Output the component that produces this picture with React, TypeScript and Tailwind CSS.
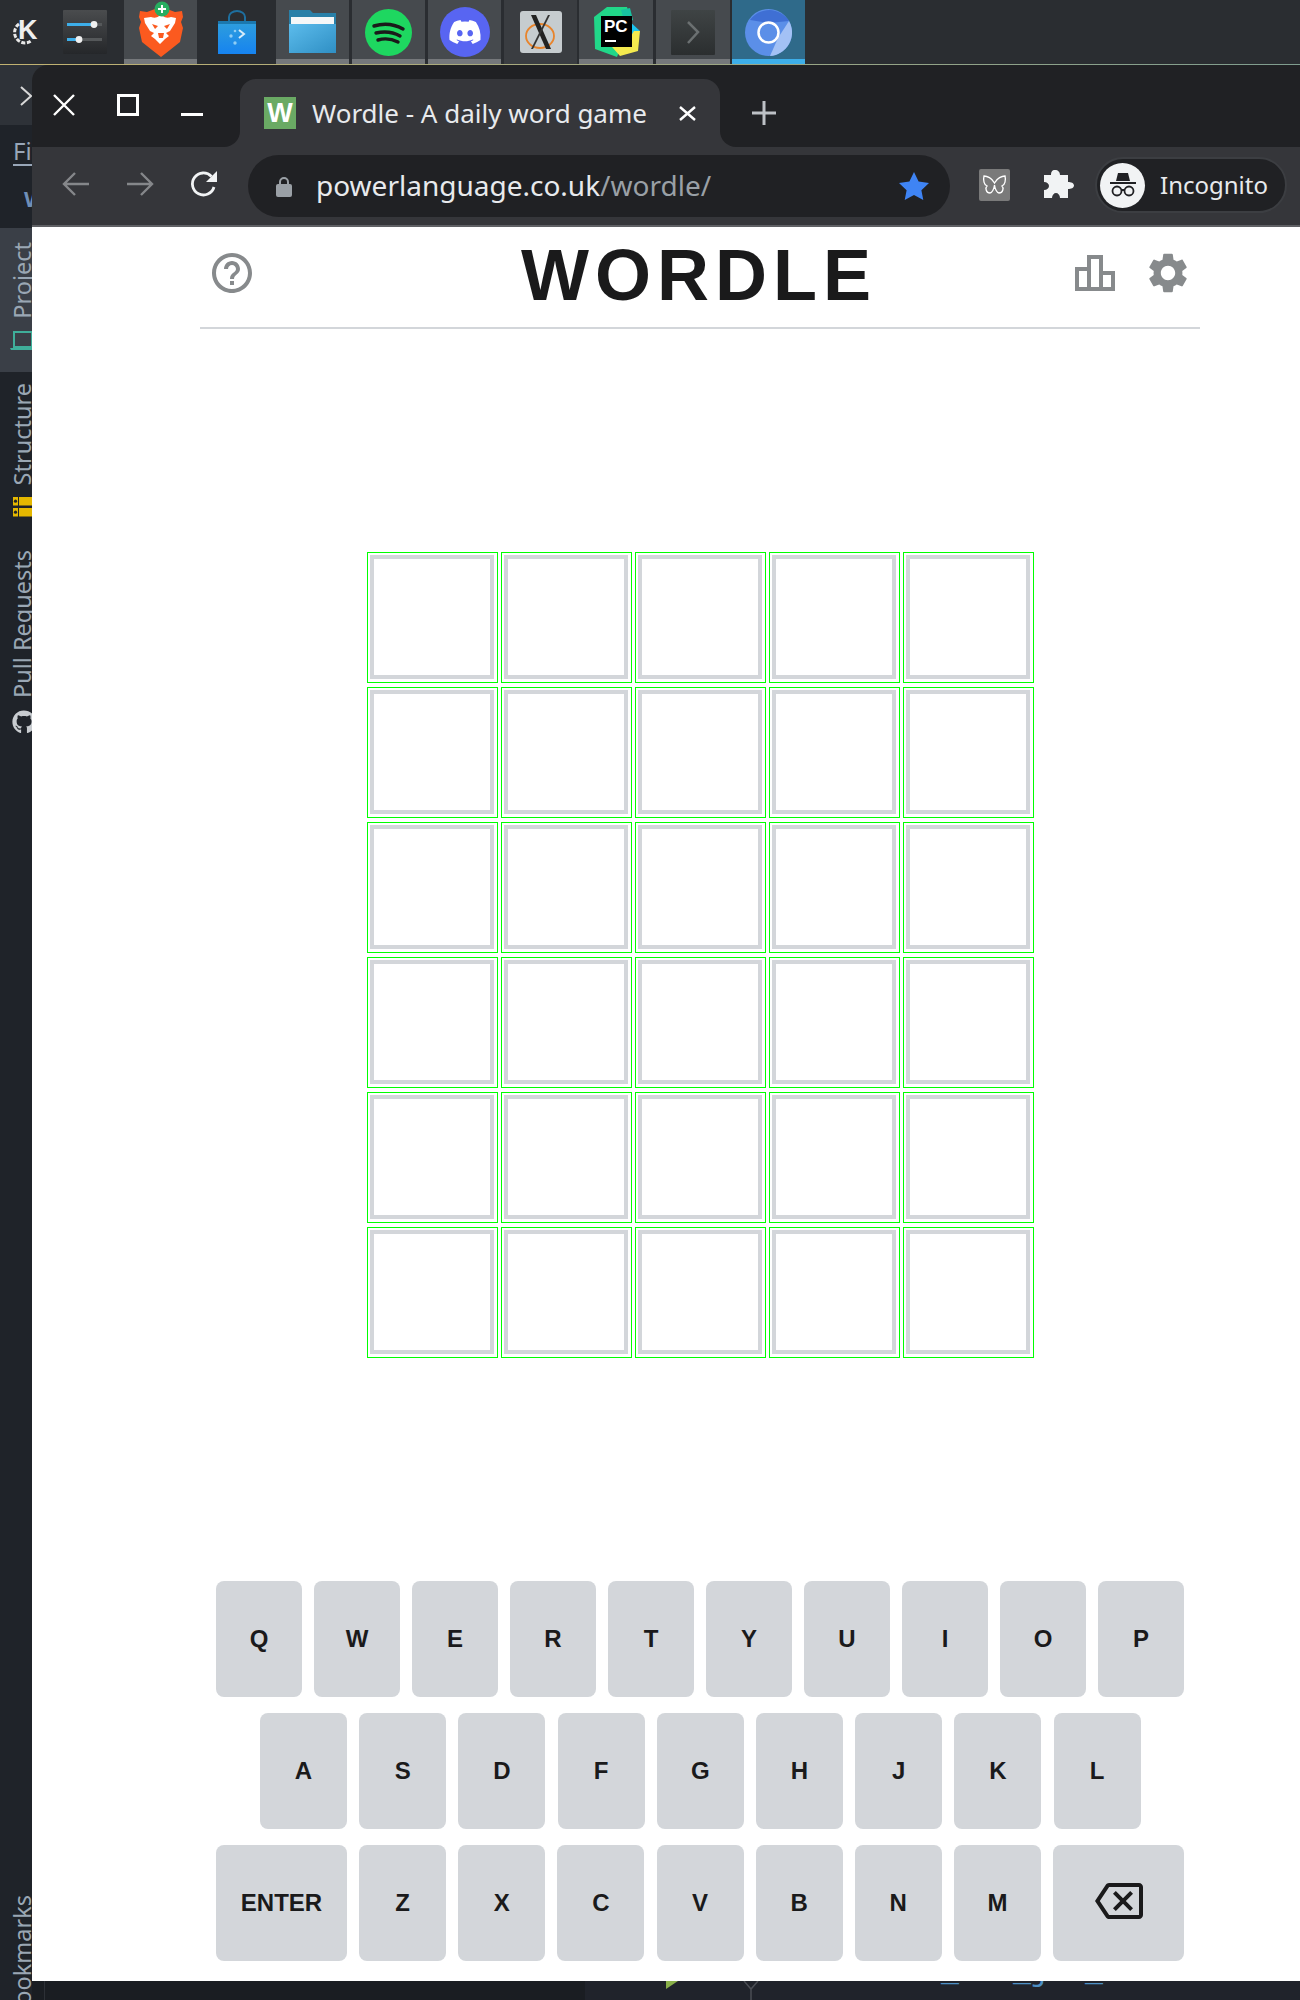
import { FaDiscord, FaGithub } from "react-icons/fa"

const ROWS = [
  ["Q", "W", "E", "R", "T", "Y", "U", "I", "O", "P"],
  ["A", "S", "D", "F", "G", "H", "J", "K", "L"],
]
const LAST_ROW = ["Z", "X", "C", "V", "B", "N", "M"]

const keyClass =
  "h-[116px] flex items-center justify-center rounded-lg bg-[#d3d6da] text-[24px] font-bold text-[#1a1a1b]"

function TaskItem({ children, active, plain, strip = true, className = "" }: { children: React.ReactNode; active?: boolean; plain?: boolean; strip?: boolean; className?: string }) {
  const bg = active ? "bg-[#2f6a8a]" : plain ? "" : strip ? "bg-[#464a4e]" : "bg-[#3a3d41]"
  return (
    <div className={`relative h-[64px] w-[73px] flex items-center justify-center ${bg} ${className}`}>
      {children}
      {strip && !plain && (
        <div className={`absolute bottom-0 left-0 right-0 h-[5px] ${active ? "bg-[#3daee9]" : "bg-[#75787b]"}`} />
      )}
    </div>
  )
}

function KdeIcon() {
  return (
    <div className="relative w-[27px] h-[26px] mt-[3px]">
      <svg width="27" height="26" viewBox="0 0 27 26" className="absolute inset-0">
        <path d="M9 3a10 10 0 1 0 12 17" fill="none" stroke="#e8e8e8" strokeWidth="3" strokeDasharray="4 1.6" />
      </svg>
      <span className="absolute left-[8px] -top-[4px] text-[27px] leading-none font-bold text-[#eeeeee] font-['Liberation_Sans',sans-serif]">K</span>
    </div>
  )
}

function SlidersIcon() {
  return (
    <svg width="44" height="44" viewBox="0 0 44 44">
      <defs>
        <linearGradient id="sl" x1="0" y1="0" x2="0" y2="1">
          <stop offset="0" stopColor="#4a4c4e" />
          <stop offset="1" stopColor="#25272a" />
        </linearGradient>
      </defs>
      <rect width="44" height="44" rx="1" fill="url(#sl)" />
      <rect x="4" y="13" width="35" height="3" fill="#55585a" />
      <rect x="4" y="13" width="27" height="3" fill="#3daee9" />
      <circle cx="31" cy="14.5" r="3.4" fill="#f0f0f0" />
      <rect x="4" y="28" width="35" height="3" fill="#55585a" />
      <rect x="4" y="28" width="15" height="3" fill="#3daee9" />
      <circle cx="16" cy="29.5" r="3.4" fill="#f0f0f0" />
    </svg>
  )
}

function BraveIcon() {
  return (
    <svg width="48" height="58" viewBox="0 0 48 58" className="mt-[-4px]">
      <path d="M10 11 18 8h12l8 3 7-1 1 6-2 5 2 6-3 14-10 8-9 7-9-7-10-8L2 27l2-6-2-5 1-6z" fill="#fb5a1f" />
      <path d="M14 16c3 1 6 1 8-1h4c2 2 5 2 8 1l5 1-1 5-5 8-4 2 3 3-4 3-5 5-5-5-4-3 3-3-4-2-5-8-1-5z" fill="#ffffff" />
      <path d="M15 23l6 2-3 3zM33 23l-6 2 3 3z" fill="#fb5a1f" />
      <path d="M21 32h6l-1 5h-4z" fill="#fb5a1f" />
      <circle cx="25" cy="8" r="7.5" fill="#27ae60" />
      <path d="M25 4v8M21 8h8" stroke="#ffffff" strokeWidth="2" />
    </svg>
  )
}

function StoreIcon() {
  return (
    <svg width="38" height="44" viewBox="0 0 38 44">
      <defs>
        <linearGradient id="bag" x1="0" y1="0" x2="0" y2="1">
          <stop offset="0" stopColor="#2f9fdc" />
          <stop offset="1" stopColor="#1683f0" />
        </linearGradient>
      </defs>
      <path d="M11 11V7a8 6 0 0 1 16 0v4" fill="none" stroke="#1e6f9f" strokeWidth="2" />
      <rect x="0" y="11" width="38" height="33" fill="url(#bag)" />
      <rect x="0" y="11" width="38" height="3" fill="#1b78ae" />
      <path d="M21 20l5 4-5 4" fill="none" stroke="#d8ecfa" strokeWidth="2" />
      <circle cx="13" cy="26" r="1.7" fill="#8fcdf5" />
      <circle cx="17" cy="21" r="1.3" fill="#8fcdf5" />
      <circle cx="17" cy="33" r="1.7" fill="#8fcdf5" />
    </svg>
  )
}

function FolderIcon() {
  return (
    <svg width="47" height="44" viewBox="0 0 47 44">
      <defs>
        <linearGradient id="fold" x1="0" y1="0" x2="1" y2="1">
          <stop offset="0" stopColor="#5cbcec" />
          <stop offset="1" stopColor="#2f8fc4" />
        </linearGradient>
      </defs>
      <path d="M0 0h21l3 3h23v14H0z" fill="#2980a8" />
      <rect x="2" y="7" width="43" height="7" fill="#f5f7f8" />
      <path d="M0 14h47v29H0z" fill="url(#fold)" />
    </svg>
  )
}

function SpotifyIcon() {
  return (
    <svg width="47" height="47" viewBox="0 0 47 47">
      <circle cx="23.5" cy="23.5" r="23.5" fill="#1ed760" />
      <path d="M9 17c10-3 20-2 29 3M11 24c9-2 17-1 24 3M13 31c7-2 14-1 20 2" fill="none" stroke="#1a1a1a" strokeWidth="3.4" strokeLinecap="round" />
    </svg>
  )
}

function XAppIcon() {
  return (
    <svg width="42" height="42" viewBox="0 0 42 42">
      <rect width="42" height="42" rx="3" fill="#c6cccf" />
      <ellipse cx="20" cy="25" rx="14" ry="12" fill="none" stroke="#e8842c" strokeWidth="1.800" />
      <path d="M11 4h5l15 34h-5z" fill="#222222" />
      <path d="M28 4h2L13 38h-2z" fill="#333333" />
    </svg>
  )
}

function PyCharmIcon() {
  return (
    <div className="relative w-[50px] h-[50px]">
      <svg width="50" height="50" viewBox="0 0 50 50" className="absolute inset-0">
        <path d="M3 10 16 0h20l4 14-14 36L4 42z" fill="#21d789" />
        <path d="M30 3l9-2 3 12-8 4z" fill="#17c1a0" />
        <path d="M36 12l13 12-6 8z" fill="#1bc4ee" />
        <path d="M14 32h24l5-8 6 0-2 20-18 5z" fill="#f4ea4e" />
      </svg>
      <div className="absolute left-[10px] top-[9px] w-[31px] h-[31px] bg-black">
        <div className="pl-[3px] pt-[1px] text-[17px] leading-[19px] font-bold text-white font-['Liberation_Sans',sans-serif]">PC</div>
        <div className="ml-[4px] mt-[4px] w-[11px] h-[2px] bg-white" />
      </div>
    </div>
  )
}

function TerminalIcon() {
  return (
    <svg width="44" height="45" viewBox="0 0 44 45">
      <defs>
        <linearGradient id="term" x1="0" y1="0" x2="0" y2="1">
          <stop offset="0" stopColor="#3f4445" />
          <stop offset="1" stopColor="#2b2e2f" />
        </linearGradient>
      </defs>
      <rect width="44" height="45" rx="1" fill="url(#term)" />
      <path d="M17 12l10 10-10 11" fill="none" stroke="#6b7071" strokeWidth="2.5" />
    </svg>
  )
}

function ChromiumIcon() {
  return (
    <svg width="47" height="47" viewBox="0 0 47 47">
      <circle cx="23.5" cy="23.5" r="23.5" fill="#5b8fe8" />
      <path d="M5 11A23.5 23.5 0 0 1 44 12L23.5 14z" fill="#3f6fd4" />
      <path d="M44 12A23.5 23.5 0 0 1 25 47l8-18z" fill="#a3c1f5" />
      <circle cx="23.5" cy="23.5" r="10" fill="#5b8fe8" stroke="#ffffff" strokeWidth="2.5" />
    </svg>
  )
}

function TaskBar() {
  return (
    <div className="h-[64px] flex items-center bg-[#2a2d31]">
      <div className="ml-[10px]"><KdeIcon /></div>
      <div className="ml-[26px]"><SlidersIcon /></div>
      <TaskItem className="ml-[17px]"><BraveIcon /></TaskItem>
      <TaskItem plain className="!w-[79px]"><StoreIcon /></TaskItem>
      <TaskItem><FolderIcon /></TaskItem>
      <TaskItem className="ml-[3px]"><SpotifyIcon /></TaskItem>
      <TaskItem className="ml-[3px]">
        <div className="w-[50px] h-[50px] rounded-full bg-[#5865f2] flex items-center justify-center">
          <FaDiscord size={34} color="#ffffff" />
        </div>
      </TaskItem>
      <TaskItem strip={false} className="ml-[3px]"><XAppIcon /></TaskItem>
      <TaskItem className="ml-[2px] !w-[74px]"><PyCharmIcon /></TaskItem>
      <TaskItem className="ml-[3px] !w-[74px]"><TerminalIcon /></TaskItem>
      <TaskItem active className="ml-[2px]"><ChromiumIcon /></TaskItem>
    </div>
  )
}

function VerticalLabel({ text }: { text: string }) {
  return (
    <div className="ml-[9px] [writing-mode:vertical-rl] rotate-180 text-[23.5px] leading-[27px] text-[#9aa7b4] whitespace-nowrap">
      {text}
    </div>
  )
}

function Sidebar() {
  return (
    <div className="w-[32px] shrink-0 flex flex-col overflow-hidden bg-[#1f2329] font-['Noto_Sans',sans-serif]">
      <div className="h-[60px] shrink-0 bg-[#2e3238] pt-[21px] pl-[20px]">
        <svg width="14" height="20" viewBox="0 0 14 20">
          <path d="M1 1l10 9-10 9" fill="none" stroke="#d8d8d8" strokeWidth="2" />
        </svg>
      </div>
      <div className="h-[103px] shrink-0 pl-[13px] pt-[11px]">
        <div className="text-[24px] leading-[30px] text-[#98a6b8] underline underline-offset-4 whitespace-nowrap">File</div>
        <div className="mt-[20px] ml-[11px] text-[22px] leading-[24px] font-bold text-[#6f8fb8]">W</div>
      </div>
      <div className="h-[144px] shrink-0 bg-[#3a3f47] pt-[14px]">
        <VerticalLabel text="Project" />
        <svg width="32" height="20" viewBox="0 0 32 20" className="mt-[12px]">
          <path d="M14 1h18v15H14z" fill="none" stroke="#3fae9a" strokeWidth="2" />
          <path d="M10 17h22v2H11z" fill="#3fae9a" />
        </svg>
      </div>
      <div className="mt-[11px]"><VerticalLabel text="Structure" /></div>
      <svg width="32" height="20" viewBox="0 0 32 20" className="mt-[12px] shrink-0">
        <rect x="13" y="0" width="19" height="8.5" fill="#e5b800" />
        <rect x="13" y="11" width="19" height="8.5" fill="#e5b800" />
        <rect x="18" y="0" width="1" height="20" fill="#1f2329" />
        <circle cx="15.5" cy="4.2" r="1.6" fill="#1f2329" />
        <circle cx="15.5" cy="15.2" r="1.6" fill="#1f2329" />
      </svg>
      <div className="mt-[33px]"><VerticalLabel text="Pull Requests" /></div>
      <div className="mt-[12px] ml-[12px] shrink-0"><FaGithub size={24} color="#c8ccd0" /></div>
      <div className="mt-auto h-[105px] shrink-0 overflow-hidden">
        <VerticalLabel text="Bookmarks" />
      </div>
    </div>
  )
}

function WindowControls() {
  return (
    <div className="w-[208px] shrink-0 rounded-br-[16px] bg-[#202124] flex items-start pl-[21px] pt-[29px]">
      <svg width="22" height="22" viewBox="0 0 22 22">
        <path d="M1 1l20 20M21 1L1 21" stroke="#ffffff" strokeWidth="2.4" />
      </svg>
      <div className="ml-[42px] w-[22px] h-[22px] border-[3px] border-white" />
      <div className="ml-[42px] mt-[19px] w-[22px] h-[3px] bg-white" />
    </div>
  )
}

function Tab() {
  return (
    <div className="w-[480px] shrink-0 bg-[#202124] pt-[14px]">
      <div className="h-[68px] rounded-t-[16px] bg-[#35363a] flex items-center pl-[24px]">
        <div className="w-[32px] h-[32px] bg-[#6aaa64] flex items-center justify-center text-[27px] font-bold text-white font-['Liberation_Sans',sans-serif]">W</div>
        <span className="ml-[16px] w-[367px] text-[26px] leading-none text-[#e8eaed] whitespace-nowrap font-['Noto_Sans',sans-serif]">Wordle - A daily word game</span>
        <svg width="17" height="15" viewBox="0 0 17 15">
          <path d="M1 1l15 13M16 1L1 14" stroke="#ffffff" strokeWidth="2.4" />
        </svg>
      </div>
    </div>
  )
}

function TitleBar() {
  return (
    <div className="h-[82px] shrink-0 flex bg-[#35363a]">
      <WindowControls />
      <Tab />
      <div className="flex-1 rounded-bl-[16px] bg-[#202124] pl-[32px] pt-[36px]">
        <svg width="24" height="24" viewBox="0 0 24 24">
          <path d="M12 0v24M0 12h24" stroke="#bdc1c6" strokeWidth="3" />
        </svg>
      </div>
    </div>
  )
}

function Toolbar() {
  return (
    <div className="h-[80px] shrink-0 flex items-start bg-[#35363a] border-b-2 border-[#5f6064] font-['Noto_Sans',sans-serif]">
      <svg width="28" height="24" viewBox="0 0 28 24" className="ml-[30px] mt-[25px]">
        <path d="M27 12H2M13 1L2 12l11 11" fill="none" stroke="#85878a" strokeWidth="2.4" />
      </svg>
      <svg width="28" height="24" viewBox="0 0 28 24" className="ml-[36px] mt-[25px]">
        <path d="M1 12h25M15 1l11 11-11 11" fill="none" stroke="#85878a" strokeWidth="2.4" />
      </svg>
      <svg width="28" height="28" viewBox="0 0 28 28" className="ml-[36px] mt-[23px]">
        <path d="M24 17a11 11 0 1 1-2.5-10.5" fill="none" stroke="#f1f3f4" strokeWidth="2.8" />
        <path d="M27 1v11H16z" fill="#f1f3f4" />
      </svg>
      <div className="ml-[30px] mt-[8px] w-[702px] h-[62px] rounded-full bg-[#202124] flex items-center pl-[28px]">
        <svg width="16" height="21" viewBox="0 0 16 21">
          <path d="M4 9V6a4 4 0 0 1 8 0v3" fill="none" stroke="#9aa0a6" strokeWidth="2" />
          <rect x="0" y="8" width="16" height="13" rx="2" fill="#9aa0a6" />
        </svg>
        <span className="ml-[24px] -mt-[3px] text-[28px] leading-none text-[#e8eaed] whitespace-nowrap">
          powerlanguage.co.uk<span className="text-[#9aa0a6]">/wordle/</span>
        </span>
        <svg width="30" height="28" viewBox="0 0 30 28" className="ml-auto mr-[21px]">
          <path d="M15 0l4.6 9.6L30 10.900l-7.600 7.300L24.300 28 15 23l-9.300 5 1.900-9.800L0 10.900l10.400-1.300z" fill="#3f84f4" />
        </svg>
      </div>
      <div className="ml-[29px] mt-[22px] w-[31px] h-[32px] rounded-[2px] bg-[#7a7a7a] flex items-center justify-center">
        <svg width="25" height="20" viewBox="0 0 25 20">
          <path d="M12.500 8C10 3 5 1 2 1c-1 4 0 9 3 10-2 2-1 7 3 7 2 0 4-4 4.500-8 .5 4 2.500 8 4.500 8 4 0 5-5 3-7 3-1 4-6 3-10-3 0-8 2-10.500 7z" fill="none" stroke="#ffffff" strokeWidth="1.300" />
        </svg>
      </div>
      <svg width="30" height="28" viewBox="0 0 30 28" className="ml-[34px] mt-[23px]">
        <path d="M11 0c3 0 5 2 5 5h8v7c3 0 6 1 6 3.500S27 19 24 19v9H16c0-3-2-5-4-5s-4 2-4 5H0v-8c3 0 5-2 5-4s-2-4-5-4V5h7c0-3 1-5 4-5z" fill="#f1f3f4" />
      </svg>
      <div className="ml-[21px] mt-[10px] w-[192px] h-[56px] rounded-full bg-[#202124] border-2 border-[#3c3e42] flex items-center pl-[3px]">
        <div className="w-[45px] h-[45px] shrink-0 rounded-full bg-[#f1f3f4] flex items-center justify-center">
          <svg width="32" height="32" viewBox="0 0 32 32">
            <path d="M9 12l2-8h10l2 8z" fill="#202124" />
            <rect x="3" y="13" width="26" height="2" fill="#202124" />
            <circle cx="10" cy="22" r="4.500" fill="none" stroke="#202124" strokeWidth="1.800" />
            <circle cx="22" cy="22" r="4.500" fill="none" stroke="#202124" strokeWidth="1.800" />
            <path d="M14 21h4" stroke="#202124" strokeWidth="1.800" />
          </svg>
        </div>
        <span className="ml-[15px] -mt-[1px] text-[24px] leading-none text-[#e8eaed]">Incognito</span>
      </div>
    </div>
  )
}

function WordleHeader() {
  return (
    <div className="h-[102px] flex items-center border-b-2 border-[#d3d6da] pb-[8px]">
      <div className="w-[116px] pl-[8px]">
        <svg width="48" height="48" viewBox="0 0 24 24" fill="#878a8c">
          <path d="M11 18h2v-2h-2v2zm1-16C6.480 2 2 6.480 2 12s4.480 10 10 10 10-4.480 10-10S17.520 2 12 2zm0 18c-4.410 0-8-3.590-8-8s3.590-8 8-8 8 3.590 8 8-3.590 8-8 8zm0-14c-2.210 0-4 1.790-4 4h2c0-1.100.9-2 2-2s2 .9 2 2c0 2-3 1.750-3 5h2c0-2.250 3-2.500 3-5 0-2.210-1.790-4-4-4z" />
        </svg>
      </div>
      <h1 className="flex-1 mt-[4px] pl-[7px] text-center text-[72px] leading-none font-bold tracking-[6px] text-[#1a1a1b]">WORDLE</h1>
      <div className="w-[125px] flex items-center">
        <svg width="48" height="48" viewBox="0 0 24 24" fill="#878a8c" className="-ml-[4px]">
          <path d="M16 11V3H8v6H2v12h20V11H16z M10 5h4v14h-4V5z M4 11h4v8H4V11z M20 19h-4v-6h4V19z" />
        </svg>
        <svg width="48" height="48" viewBox="0 0 24 24" fill="#878a8c" className="ml-[25px]">
          <path d="M19.140 12.940c.04-.3.06-.61.06-.94 0-.32-.02-.64-.07-.94l2.030-1.580c.18-.14.23-.41.12-.61l-1.920-3.320c-.12-.22-.37-.29-.59-.22l-2.390.96c-.5-.38-1.030-.7-1.620-.94L14.400 2.810c-.04-.24-.24-.41-.48-.41h-3.840c-.24 0-.43.17-.47.41L9.250 5.350c-.59.24-1.130.57-1.620.94L5.240 5.330c-.22-.08-.47 0-.59.22L2.740 8.870c-.12.21-.08.47.12.61l2.030 1.580c-.05.3-.09.63-.09.94s.02.64.07.94l-2.030 1.580c-.18.14-.23.41-.12.61l1.920 3.320c.12.22.37.29.59.22l2.390-.96c.5.38 1.030.7 1.620.94l.36 2.540c.05.24.24.41.48.41h3.840c.24 0 .44-.17.47-.41l.36-2.540c.59-.24 1.130-.56 1.620-.94l2.390.96c.22.08.47 0 .59-.22l1.920-3.320c.12-.22.07-.47-.12-.61l-2.010-1.580zM12 15.600c-1.980 0-3.600-1.620-3.600-3.600s1.620-3.600 3.600-3.600 3.600 1.620 3.600 3.600-1.620 3.600-3.600 3.600z" />
        </svg>
      </div>
    </div>
  )
}

function Board() {
  return (
    <div className="ml-[167px] mt-[223px] w-[667px] grid grid-cols-5 gap-x-[3px] gap-y-[4px]">
      {Array.from({ length: 30 }).map((_, i) => (
        <div key={i} className="h-[131px] border border-[#00ff00] pl-[2px] pt-[2px]">
          <div className="w-[124px] h-[124px] border-4 border-[#d3d6da]" />
        </div>
      ))}
    </div>
  )
}

function Keyboard() {
  return (
    <div className="ml-[16px] mt-[223px] w-[968px] flex flex-col gap-[16px]">
      <div className="flex gap-[12px]">
        {ROWS[0].map(k => (
          <div key={k} className={`${keyClass} w-[86px]`}>{k}</div>
        ))}
      </div>
      <div className="ml-[44px] flex gap-[12.2px]">
        {ROWS[1].map(k => (
          <div key={k} className={`${keyClass} w-[87px]`}>{k}</div>
        ))}
      </div>
      <div className="flex gap-[12.125px]">
        <div className={`${keyClass} w-[131px]`}>ENTER</div>
        {LAST_ROW.map(k => (
          <div key={k} className={`${keyClass} w-[87px]`}>{k}</div>
        ))}
        <div className={`${keyClass} w-[131px]`}>
          <svg width="48" height="48" viewBox="0 0 24 24" fill="#1a1a1b" className="-mt-[5px]">
            <path d="M22 3H7c-.69 0-1.230.35-1.590.88L0 12l5.410 8.110c.36.53.9.89 1.590.89h15c1.100 0 2-.9 2-2V5c0-1.100-.9-2-2-2zm0 16H7.070L2.400 12l4.660-7H22v14zm-11.590-2L14 13.410 17.590 17 19 15.590 15.410 12 19 8.410 17.590 7 14 10.590 10.410 7 9 8.410 12.590 12 9 15.590z" />
          </svg>
        </div>
      </div>
    </div>
  )
}

function BottomStrip() {
  return (
    <div className="h-[19px] shrink-0 flex overflow-hidden bg-[#1a1d22]">
      <div className="ml-[12px] h-full w-[1px] bg-[#2d3036]" />
      <div className="ml-[540px] flex-1 h-full bg-[#20232b] relative overflow-hidden font-['Liberation_Mono',monospace] text-[30px] leading-[30px] whitespace-nowrap">
        <svg width="12" height="8" viewBox="0 0 12 8" className="absolute left-[81px] top-0">
          <path d="M0 0h12L0 8z" fill="#8ab04a" />
        </svg>
        <svg width="16" height="19" viewBox="0 0 16 19" className="absolute left-[158px] top-0">
          <path d="M1 0l7 8 7-8M8 8v11" fill="none" stroke="#4a4d54" strokeWidth="1.500" />
        </svg>
        <span className="absolute left-[181px] -top-[23px] text-[#b04ab8]">def</span>
        <span className="absolute left-[284px] -top-[23px] text-[#4d8fc4]">test_for_job_creation</span>
      </div>
    </div>
  )
}

export default function App() {
  return (
    <div className="w-[1300px] h-[2000px] flex flex-col overflow-hidden bg-[#1f2329] font-['Liberation_Sans',sans-serif]">
      <TaskBar />
      <div className="h-[1px] shrink-0 bg-gradient-to-r from-[#c2b271] to-[#7f9d8f]" />
      <div className="flex-1 flex min-h-0">
        <Sidebar />
        <div className="flex-1 flex flex-col min-w-0 bg-[#2e3238]">
          <div className="h-[1916px] shrink-0 flex flex-col rounded-tl-[16px] overflow-hidden">
            <TitleBar />
            <Toolbar />
            <div className="flex-1 bg-white">
              <div className="ml-[168px] w-[1000px]">
                <WordleHeader />
                <Board />
                <Keyboard />
              </div>
            </div>
          </div>
          <BottomStrip />
        </div>
      </div>
    </div>
  )
}
